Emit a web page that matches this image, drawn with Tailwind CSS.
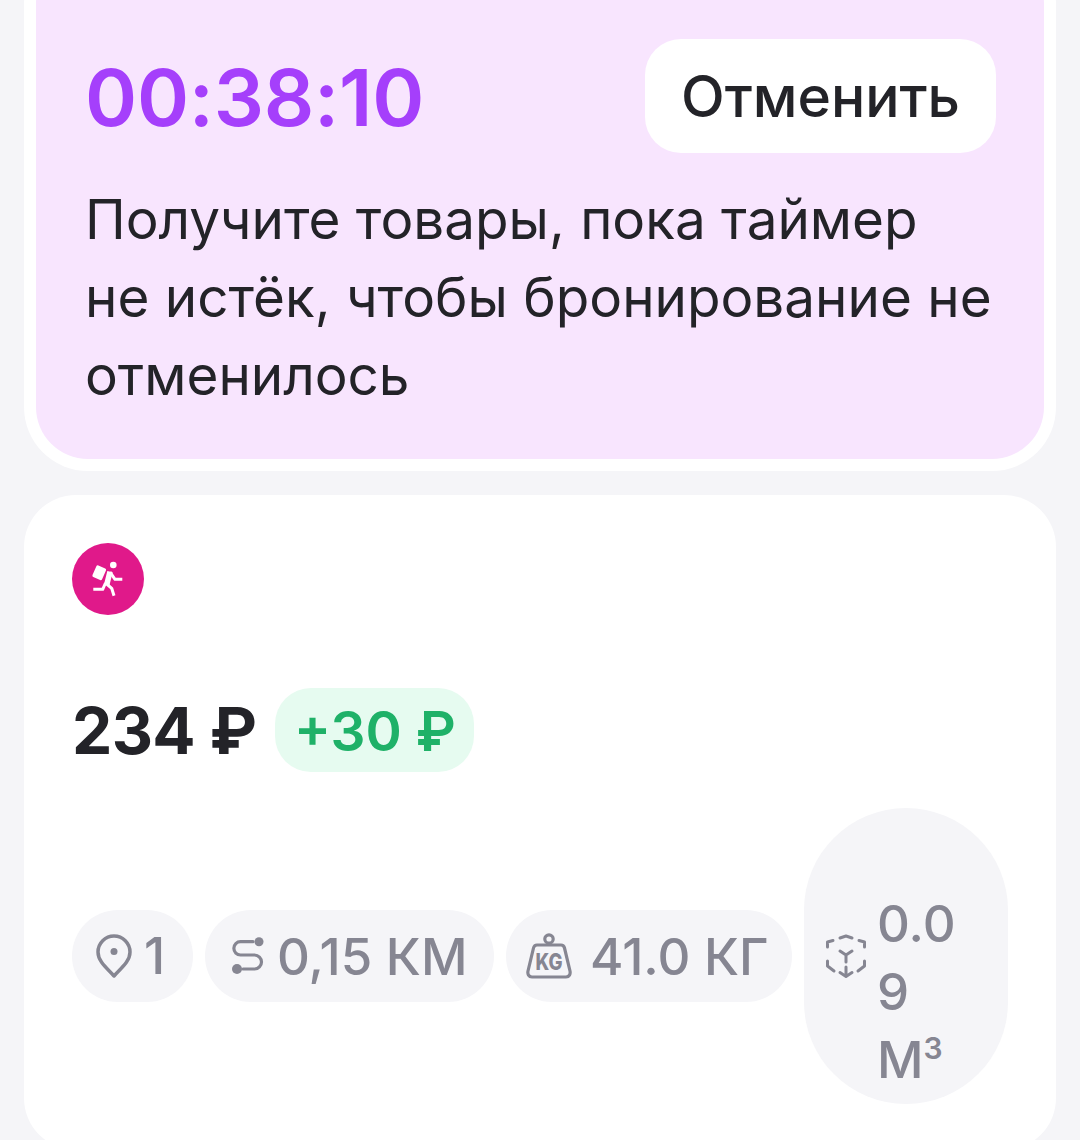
<!DOCTYPE html>
<html lang="ru"><head><meta charset="utf-8"><script src="https://cdn.jsdelivr.net/npm/@tailwindcss/browser@4"></script></head>
<body class="m-0 w-[1080px] h-[1140px] overflow-hidden bg-[#f5f5f8] font-['Inter',sans-serif] text-[#232328]">
<div class="mx-6 -mt-[60px] p-3 bg-white rounded-[64px]">
  <div class="bg-[#f8e5fe] rounded-[52px] pl-[49px] pr-12 pt-[87px] pb-[45px]">
    <div class="flex items-center justify-between">
      <div class="text-[79px] leading-[94px] font-semibold text-[#a53ffb] tracking-[-0.003em] pt-[1px]">00:38:10</div>
      <div class="w-[351px] h-[114px] rounded-[36px] bg-white flex items-center justify-center text-[57px] font-medium pt-[2px]">Отменить</div>
    </div>
    <p class="mt-[27px] text-[54.8px] leading-[78px]">Получите товары, пока таймер<br>не истёк, чтобы бронирование не<br>отменилось</p>
  </div>
</div>
<div class="mx-6 mt-6 h-[655px] bg-white rounded-[52px] pl-12 pr-12 pt-12">
  <div class="w-[72px] h-[72px] rounded-full bg-[#e0198a] flex items-center justify-center">
    <svg width="40" height="40" viewBox="0 0 40 40" fill="none" stroke="white" stroke-width="3" stroke-linejoin="round"><circle cx="25.300" cy="6" r="3.300" fill="white" stroke="none"/><rect x="6" y="7.500" width="10.500" height="12.500" rx="1.500" fill="white" stroke="none" transform="rotate(24 11.300 13.700)"/><path d="M22 12.700L18.700 26" stroke-width="5.500"/><path d="M22 13l5 7.300h7.300M17.500 24l-2.800 6.300H5.300M18.700 25l5 4.300 2.300 7.400"/></svg>
  </div>
  <div class="mt-[72px] flex items-center gap-[19px]">
    <div class="text-[64px] leading-[84px] font-bold tracking-[-0.01em] pt-[2px]">234 ₽</div>
    <div class="h-[84px] w-[199px] justify-center rounded-[36px] bg-[#e6fbf0] text-[#1fb168] flex items-center text-[55px] font-semibold pt-[2px]">+30 ₽</div>
  </div>
  <div class="mt-[35px] flex items-center gap-3 text-[#868692] text-[51px] font-medium leading-[68px]">
    <div class="h-[92px] w-[121px] shrink-0 rounded-[46px] bg-[#f5f5f8] flex items-center pl-[23px] gap-[11px]">
      <svg width="38" height="46" viewBox="0 0 38 46" fill="none" stroke="#868692" stroke-width="3.500"><path d="M19 43C13 36 3 29 3 19a16 16 0 0 1 32 0c0 10-10 17-16 24z" stroke-linejoin="round"/><circle cx="19" cy="18.500" r="3.500" fill="#868692" stroke="none"/></svg>
      <span>1</span>
    </div>
    <div class="h-[92px] w-[289px] shrink-0 rounded-[46px] bg-[#f5f5f8] flex items-center pl-[27px] gap-[13px]">
      <svg width="32" height="38" viewBox="0 0 32 38" fill="none" stroke="#868692" stroke-width="3.200"><path d="M21 4.700H8.500a6.650 6.650 0 0 0 0 13.300H22.500a7 7 0 0 1 0 14H11" stroke-linecap="round"/><circle cx="27" cy="4.700" r="4.500" fill="#868692" stroke="none"/><circle cx="5" cy="32" r="5" fill="#868692" stroke="none"/></svg>
      <span class="whitespace-nowrap pt-[1px]">0,15 КМ</span>
    </div>
    <div class="h-[92px] w-[286px] shrink-0 rounded-[46px] bg-[#f5f5f8] flex items-center pl-[20px] gap-[18px]">
      <svg width="46" height="46" viewBox="0 0 46 46" fill="none" stroke="#868692" stroke-width="3.200"><circle cx="23" cy="6" r="4.200"/><path d="M11 12h24c2 0 3 1 3.500 3L44 38c.6 3-.6 6-4 6H6c-3.400 0-4.600-3-4-6l5.500-23c.5-2 1.500-3 3.500-3z" stroke-linejoin="round"/><text x="23" y="36.500" text-anchor="middle" font-family="Inter" font-size="23" font-weight="800" textLength="27" lengthAdjust="spacingAndGlyphs" fill="#868692" stroke="none">KG</text></svg>
      <span class="whitespace-nowrap pt-[1px]">41.0 КГ</span>
    </div>
    <div class="h-[296px] w-[204px] shrink-0 rounded-[102px] bg-[#f5f5f8] flex items-center pl-[22px] gap-[11px]">
      <svg class="shrink-0" width="40" height="45" viewBox="0 0 40 45" fill="none" stroke="#868692" stroke-width="3" stroke-linecap="round" stroke-linejoin="round"><path d="M14 4l6-2 6 2M1.500 13V8L7 6.500M38.500 13V8L33 6.500M1.500 27v5L8 37M38.500 27v5L32 37M14 17l6 4 6-4M20 21v7M20 33v9M14 38.500l6 4 6-4"/></svg>
      <span class="block w-[84px] mt-[72px]">0.0<br>9<br>М<sup class="text-[30px] font-semibold top-[-19px]">3</sup></span>
    </div>
  </div>
</div>
</body></html>
